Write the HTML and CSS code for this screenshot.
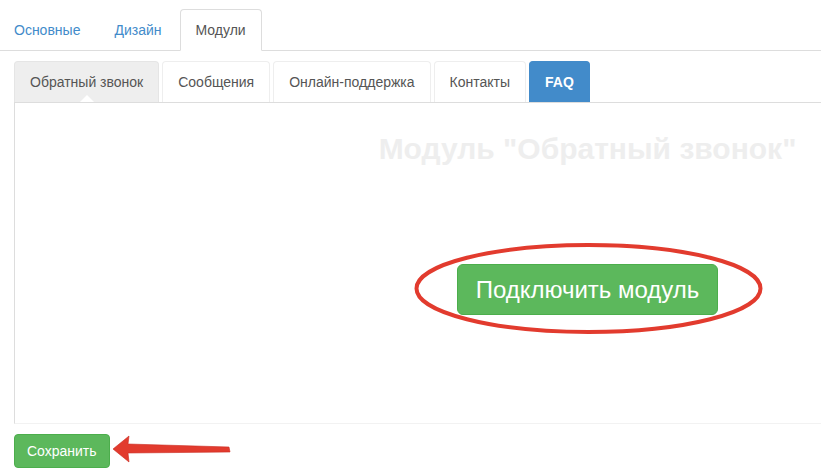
FILE: index.html
```html
<!DOCTYPE html>
<html lang="ru">
<head>
<meta charset="utf-8">
<title>Модули</title>
<link rel="stylesheet" href="styles.css">
</head>
<body>
<div class="page">
  <ul class="tabs main-tabs">
    <li><a href="#">Основные</a></li>
    <li><a href="#">Дизайн</a></li>
    <li class="active"><a href="#">Модули</a></li>
  </ul>
  <div class="sub">
    <ul class="tabs sub-tabs">
      <li class="active"><a href="#">Обратный звонок</a></li>
      <li><a href="#">Сообщения</a></li>
      <li><a href="#">Онлайн-поддержка</a></li>
      <li><a href="#">Контакты</a></li>
      <li class="faq"><a href="#">FAQ</a></li>
    </ul>
    <div class="panel">
      <h2 class="panel-title">Модуль "Обратный звонок"</h2>
      <div class="action">
        <div class="mark-wrap">
          <button class="btn btn-lg">Подключить модуль</button>
          <svg class="ellipse" width="351" height="93" viewBox="0 0 351 93">
            <ellipse cx="175.5" cy="46.5" rx="172" ry="43.5" fill="none" stroke="#e23b2e" stroke-width="4"/>
          </svg>
        </div>
      </div>
    </div>
    <div class="footer">
      <button class="btn">Сохранить</button>
      <svg class="arrow" width="130" height="40" viewBox="0 0 130 40">
        <polygon points="0,15 16,2 15,10 116,13 117,18 15,19 16,28" fill="#e23b2e" stroke="#c92a20" stroke-width="0.6" stroke-linejoin="round"/>
      </svg>
    </div>
  </div>
</div>
</body>
</html>
```
FILE: styles.css
```css
html, body {
  margin: 0;
  padding: 0;
  background: #fff;
  overflow: hidden;
}
body {
  font-family: "Liberation Sans", Arial, sans-serif;
  font-size: 14px;
  line-height: 20px;
  color: #333;
}
.page {
  width: 821px;
  height: 476px;
  overflow: hidden;
}
.tabs {
  list-style: none;
  margin: 0;
  padding: 0;
  display: flex;
  border-bottom: 1px solid #ddd;
}
.tabs li {
  margin-right: 2px;
}
.tabs a {
  display: block;
  padding: 10px 15px;
  line-height: 20px;
  text-decoration: none;
  border: 1px solid transparent;
  border-radius: 4px 4px 0 0;
  white-space: nowrap;
}
.main-tabs {
  padding-top: 9px;
  margin-left: -2px;
}
.main-tabs a {
  color: #428bca;
  margin-bottom: -1px;
}
.main-tabs li.active a {
  color: #555;
  background: #fff;
  border-color: #ddd #ddd transparent;
}
.sub {
  margin: 10px 0 0 14px;
  width: 1146px;
}
.sub-tabs li {
  margin-right: 3px;
}
.sub-tabs a {
  color: #555;
  border-color: #eee;
  border-bottom: 0;
}
.sub-tabs li.active a {
  position: relative;
  background: #eee;
  border-color: #e5e5e5;
}
.sub-tabs li.active a::after {
  content: "";
  position: absolute;
  left: 50%;
  bottom: 0;
  margin-left: -7px;
  border: 7px solid transparent;
  border-bottom-color: #fff;
  border-top: 0;
}
.sub-tabs li.faq a {
  background: #428bca;
  border-color: #428bca;
  color: #fff;
  font-weight: bold;
}
.panel {
  height: 320px;
  border-left: 1px solid #ddd;
  border-bottom: 1px solid #f2f2f2;
  text-align: center;
}
.panel-title {
  margin: 0;
  padding-top: 29px;
  font-size: 30px;
  line-height: 33px;
  font-weight: bold;
  color: #eee;
}
.action {
  margin-top: 99px;
  display: flex;
  justify-content: center;
}
.mark-wrap {
  position: relative;
}
.btn {
  font-family: "Liberation Sans", Arial, sans-serif;
  font-size: 14px;
  line-height: 20px;
  padding: 6px 12px;
  color: #fff;
  background: #5cb85c;
  border: 1px solid #4cae4c;
  border-radius: 4px;
  cursor: pointer;
}
.btn-lg {
  font-size: 24px;
  line-height: 31px;
  padding: 9px 18px;
  border-radius: 6px;
  display: block;
}
.ellipse {
  position: absolute;
  left: -44px;
  top: -22px;
}
.footer {
  position: relative;
  margin-top: 10px;
  display: flex;
}
.arrow {
  position: absolute;
  left: 99px;
  top: 0;
}
```
